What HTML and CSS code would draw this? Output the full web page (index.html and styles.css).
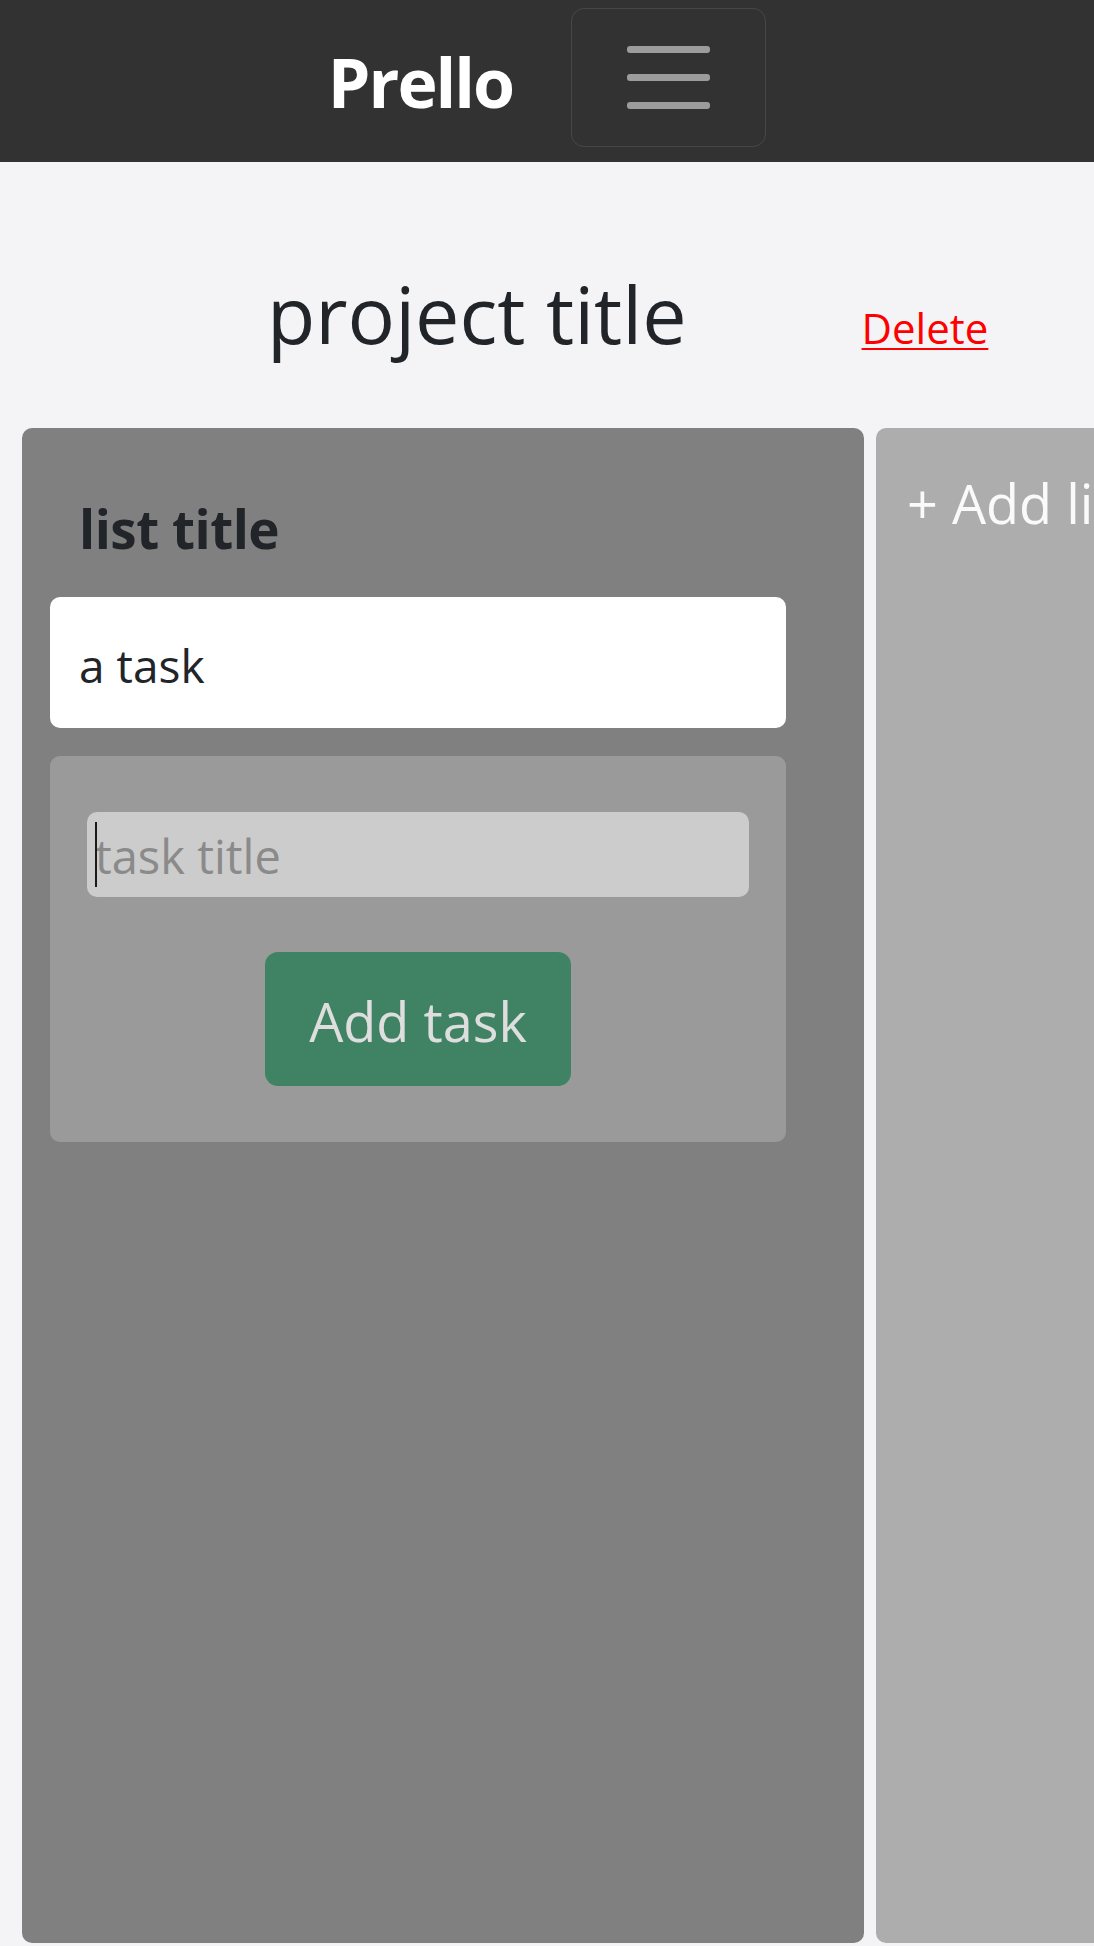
FILE: index.html
```html
<!DOCTYPE html>
<html lang="en">
<head>
<meta charset="utf-8">
<title>Prello</title>
<link rel="stylesheet" href="styles.css">
</head>
<body>
<nav class="navbar">
  <span class="brand">Prello</span>
  <button class="toggler" type="button" aria-label="Toggle navigation">
    <span class="bar"></span>
    <span class="bar"></span>
    <span class="bar"></span>
  </button>
</nav>
<header class="project-head">
  <h1 class="project-title">project title</h1>
  <a class="delete" href="#">Delete</a>
</header>
<main class="board">
  <section class="list">
    <h2 class="list-title">list title</h2>
    <div class="task">a task</div>
    <form class="task-form">
      <div class="field">
        <input class="task-input" type="text" placeholder="task title">
        <span class="caret"></span>
      </div>
      <button class="add-btn" type="button">Add task</button>
    </form>
  </section>
  <section class="add-list">+ Add list</section>
</main>
</body>
</html>
```
FILE: styles.css
```css
* { box-sizing: border-box; }
html, body {
  margin: 0;
  padding: 0;
}
body {
  background: #f4f4f6;
  font-family: "Open Sans", "Noto Sans", sans-serif;
  color: #212529;
  width: 1094px;
  overflow: hidden;
}
.navbar {
  height: 162px;
  background: #323232;
  display: flex;
  align-items: center;
  justify-content: center;
  gap: 58px;
}
.brand {
  color: #ffffff;
  font-weight: 700;
  font-size: 68px;
  line-height: 68px;
  letter-spacing: -2px;
  margin-top: 2px;
}
.toggler {
  width: 195px;
  height: 139px;
  margin-top: -7px;
  background: transparent;
  border: 1.5px solid rgba(255, 255, 255, 0.1);
  border-radius: 13px;
  display: flex;
  flex-direction: column;
  align-items: center;
  justify-content: center;
  gap: 21px;
  padding: 0;
}
.bar {
  display: block;
  width: 83px;
  height: 7px;
  border-radius: 3px;
  background: #9c9c9c;
}
.project-head {
  display: flex;
  align-items: baseline;
  padding-left: 267px;
  margin-top: 105px;
  gap: 175px;
}
.project-title {
  margin: 0;
  font-weight: 400;
  font-size: 79px;
  line-height: 93.6px;
  color: #212529;
}
.delete {
  color: #ff0000;
  font-size: 42px;
  text-decoration: underline;
  text-decoration-thickness: 2px;
  text-underline-offset: 4px;
}
.board {
  display: flex;
  gap: 12px;
  padding-left: 22px;
  margin-top: 67px;
  overflow: hidden;
}
.list, .add-list {
  flex: 0 0 842px;
  height: 1515px;
  border-radius: 10px;
}
.list {
  background: #808080;
  padding: 68px 78px 0 28px;
}
.list-title {
  margin: 0 0 35px 29px;
  font-size: 53px;
  font-weight: 700;
  line-height: 66px;
  letter-spacing: -0.5px;
  color: #212529;
}
.task {
  background: #ffffff;
  border-radius: 10px;
  padding: 37px 29px 32px;
  font-size: 46px;
  line-height: 62px;
  color: #212529;
}
.task-form {
  margin: 28px 0 0;
  background: #9a9a9a;
  border-radius: 10px;
  padding: 56px 37px;
  display: flex;
  flex-direction: column;
  align-items: center;
}
.field {
  position: relative;
  width: 100%;
}
.task-input {
  display: block;
  width: 100%;
  height: 85px;
  border: none;
  border-radius: 10px;
  background: #cccccc;
  padding: 4px 8px 0;
  font-family: "Open Sans", "Noto Sans", sans-serif;
  font-size: 47px;
  color: #212529;
  outline: none;
}
.task-input::placeholder {
  color: #8a8a8a;
}
.caret {
  position: absolute;
  left: 8px;
  top: 10px;
  width: 1.5px;
  height: 65px;
  background: #1a1a1a;
}
.add-btn {
  margin-top: 55px;
  width: 306px;
  height: 134px;
  border: none;
  border-radius: 13px;
  background: #408364;
  color: #dedede;
  font-family: "Open Sans", "Noto Sans", sans-serif;
  font-size: 54px;
  line-height: 130px;
  padding: 4px 0 0;
}
.add-list {
  background: #adadad;
  padding: 35px 0 0 31px;
  color: #fafafa;
  font-size: 54px;
  line-height: 80px;
  white-space: nowrap;
}
```
